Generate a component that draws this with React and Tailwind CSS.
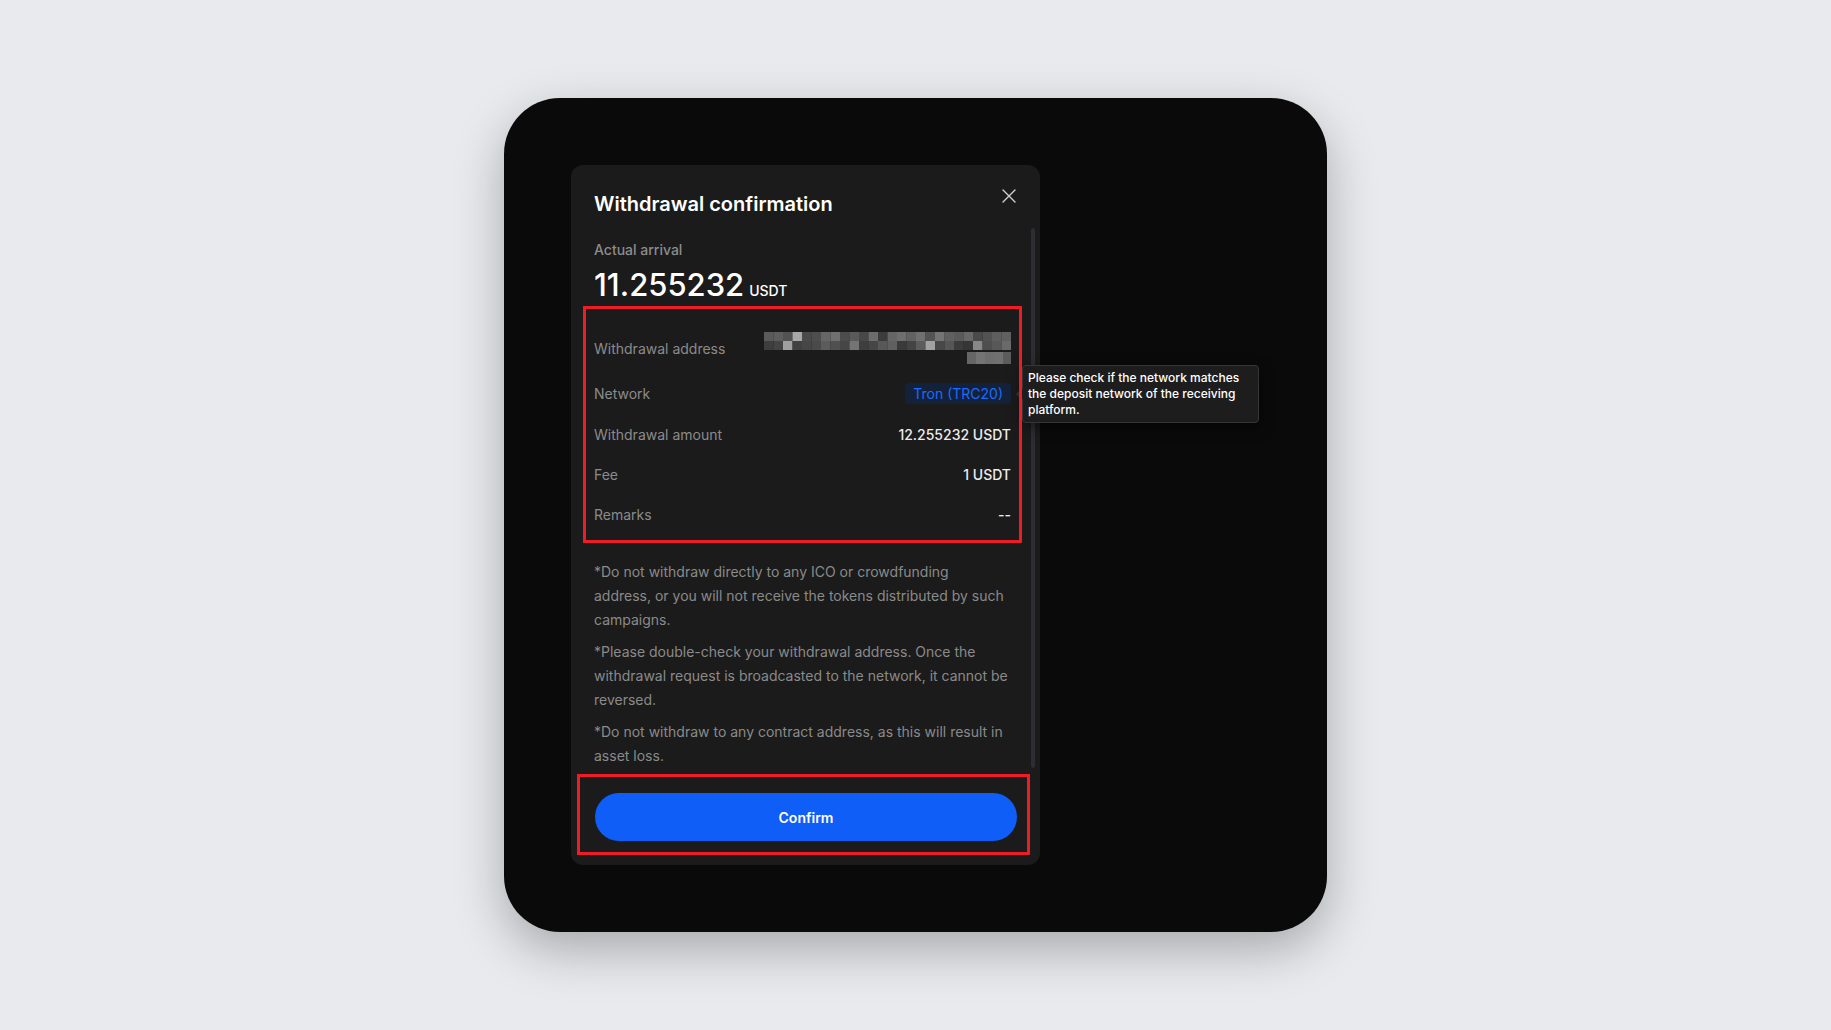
import React from "react";

const rowA = ["5a", "5e", "52", "a8", "4a", "4e", "66", "70", "4c", "5a", "48", "6c", "3c", "66", "6e", "62", "70", "54", "74", "60", "5a", "68", "4a", "52", "5e", "60"];
const rowB = ["3e", "44", "a0", "40", "46", "4a", "5c", "50", "46", "74", "3e", "46", "58", "60", "3a", "44", "5c", "a2", "48", "56", "3c", "36", "88", "4e", "58", "6a"];
const rowC = ["66", "74", "6e", "70", "5c"];

const PixelAddress = () => (
  <svg width="247" height="33" viewBox="0 0 247 33" className="block">
    {rowA.map((c, i) => (
      <rect key={"a" + i} x={i * 9.5} y={0} width={9.6} height={9} fill={"#" + c + c + c} />
    ))}
    {rowB.map((c, i) => (
      <rect key={"b" + i} x={i * 9.5} y={9} width={9.6} height={9} fill={"#" + c + c + c} />
    ))}
    {rowC.map((c, i) => (
      <rect key={"c" + i} x={203 + i * 9} y={20} width={9.1} height={12} fill={"#" + c + c + c} />
    ))}
  </svg>
);

const Row = ({ label, h, children }) => (
  <div className={`flex items-center justify-between ${h}`}>
    <span className="text-[14px] text-[#8b8b8b]">{label}</span>
    {children}
  </div>
);

export default function App() {
  return (
    <div
      className="w-full h-screen flex items-center justify-center bg-[#e8eaed]"
      style={{ fontFamily: "Inter, 'Noto Sans', sans-serif" }}
    >
      <div className="w-[823px] h-[834px] rounded-[56px] bg-[#0a0a0a] p-[67px] shadow-[0_18px_50px_rgba(0,0,0,0.28)]">
        <div className="relative w-[469px] h-[700px] rounded-[12px] bg-[#1b1b1b] flex flex-col">
          {/* header */}
          <div className="flex items-start justify-between pl-[23px] pr-[24px] pt-[24px]">
            <h2 className="pt-[2px] text-[20px] leading-[26px] font-semibold text-white">
              Withdrawal confirmation
            </h2>
            <svg width="14" height="14" viewBox="0 0 14 14" className="text-[#d0d0d0]">
              <path d="M1 1L13 13M13 1L1 13" stroke="currentColor" strokeWidth="1.4" strokeLinecap="round" />
            </svg>
          </div>

          {/* scroll area */}
          <div className="mt-[9px] h-[542px] overflow-hidden pl-[12px] pr-[18px]">
            <div className="pt-[14px] px-[11px]">
              <p className="text-[14px] leading-[20px] font-medium text-[#8c8c8c]">Actual arrival</p>
              <div className="mt-[7px] h-[36px] leading-[36px] whitespace-nowrap text-white font-medium">
                <span className="text-[31px]">11.255232</span>
                <span className="ml-[5px] text-[14px]">USDT</span>
              </div>
            </div>

            <div className="relative z-10 mt-[3px] border-[3px] border-[#ee1c25] px-[8px] pt-[14px] pb-[6px]">
              <Row label="Withdrawal address" h="h-[50px]">
                <PixelAddress />
              </Row>
              <Row label="Network" h="h-[41px]">
                <span className="h-[21px] px-[8px] rounded-[4px] bg-[#13223a] text-[14px] leading-[21px] text-[#1a6bff]">
                  Tron (TRC20)
                </span>
              </Row>
              <Row label="Withdrawal amount" h="h-[40px]">
                <span className="text-[14px] font-medium text-[#ececec]">12.255232 USDT</span>
              </Row>
              <Row label="Fee" h="h-[40px]">
                <span className="text-[14px] font-medium text-[#ececec]">1 USDT</span>
              </Row>
              <Row label="Remarks" h="h-[40px]">
                <span className="text-[14px] font-medium text-[#ececec]">--</span>
              </Row>
            </div>

            <div className="mt-[17px] pl-[11px] pr-[14px] flex flex-col gap-[8px] text-[14px] leading-[24px] text-[#8a8a8a]">
              <p>*Do not withdraw directly to any ICO or crowdfunding address, or you will not receive the tokens distributed by such campaigns.</p>
              <p>*Please double-check your withdrawal address. Once the withdrawal request is broadcasted to the network, it cannot be reversed.</p>
              <p>*Do not withdraw to any contract address, as this will result in asset loss.</p>
            </div>
          </div>

          {/* footer */}
          <div className="mt-[6px] ml-[6px] mr-[10px] border-[3px] border-[#ee1c25] pt-[16px] pb-[11px] pl-[15px] pr-[10px]">
            <button className="w-full h-[48px] rounded-full bg-[#0f5ef7] text-[14px] font-semibold text-white">
              Confirm
            </button>
          </div>

          {/* scrollbar */}
          <div className="absolute right-[5px] top-[63px] w-[4px] h-[540px] rounded-full bg-[#2c2e34]" />

          {/* tooltip */}
          <div className="absolute z-0 left-[451px] top-[200px] w-[237px] rounded-[4px] border border-[#363636] bg-[#1d1d1d] px-[5px] py-[4px] shadow-[0_4px_14px_rgba(0,0,0,0.5)]">
            <div className="absolute left-[-5px] top-[24px] w-[8px] h-[8px] rotate-45 border-l border-b border-[#363636] bg-[#1d1d1d]" />
            <p className="relative text-[12px] leading-[16px] font-medium text-white">
              Please check if the network matches the deposit network of the receiving platform.
            </p>
          </div>
        </div>
      </div>
    </div>
  );
}
